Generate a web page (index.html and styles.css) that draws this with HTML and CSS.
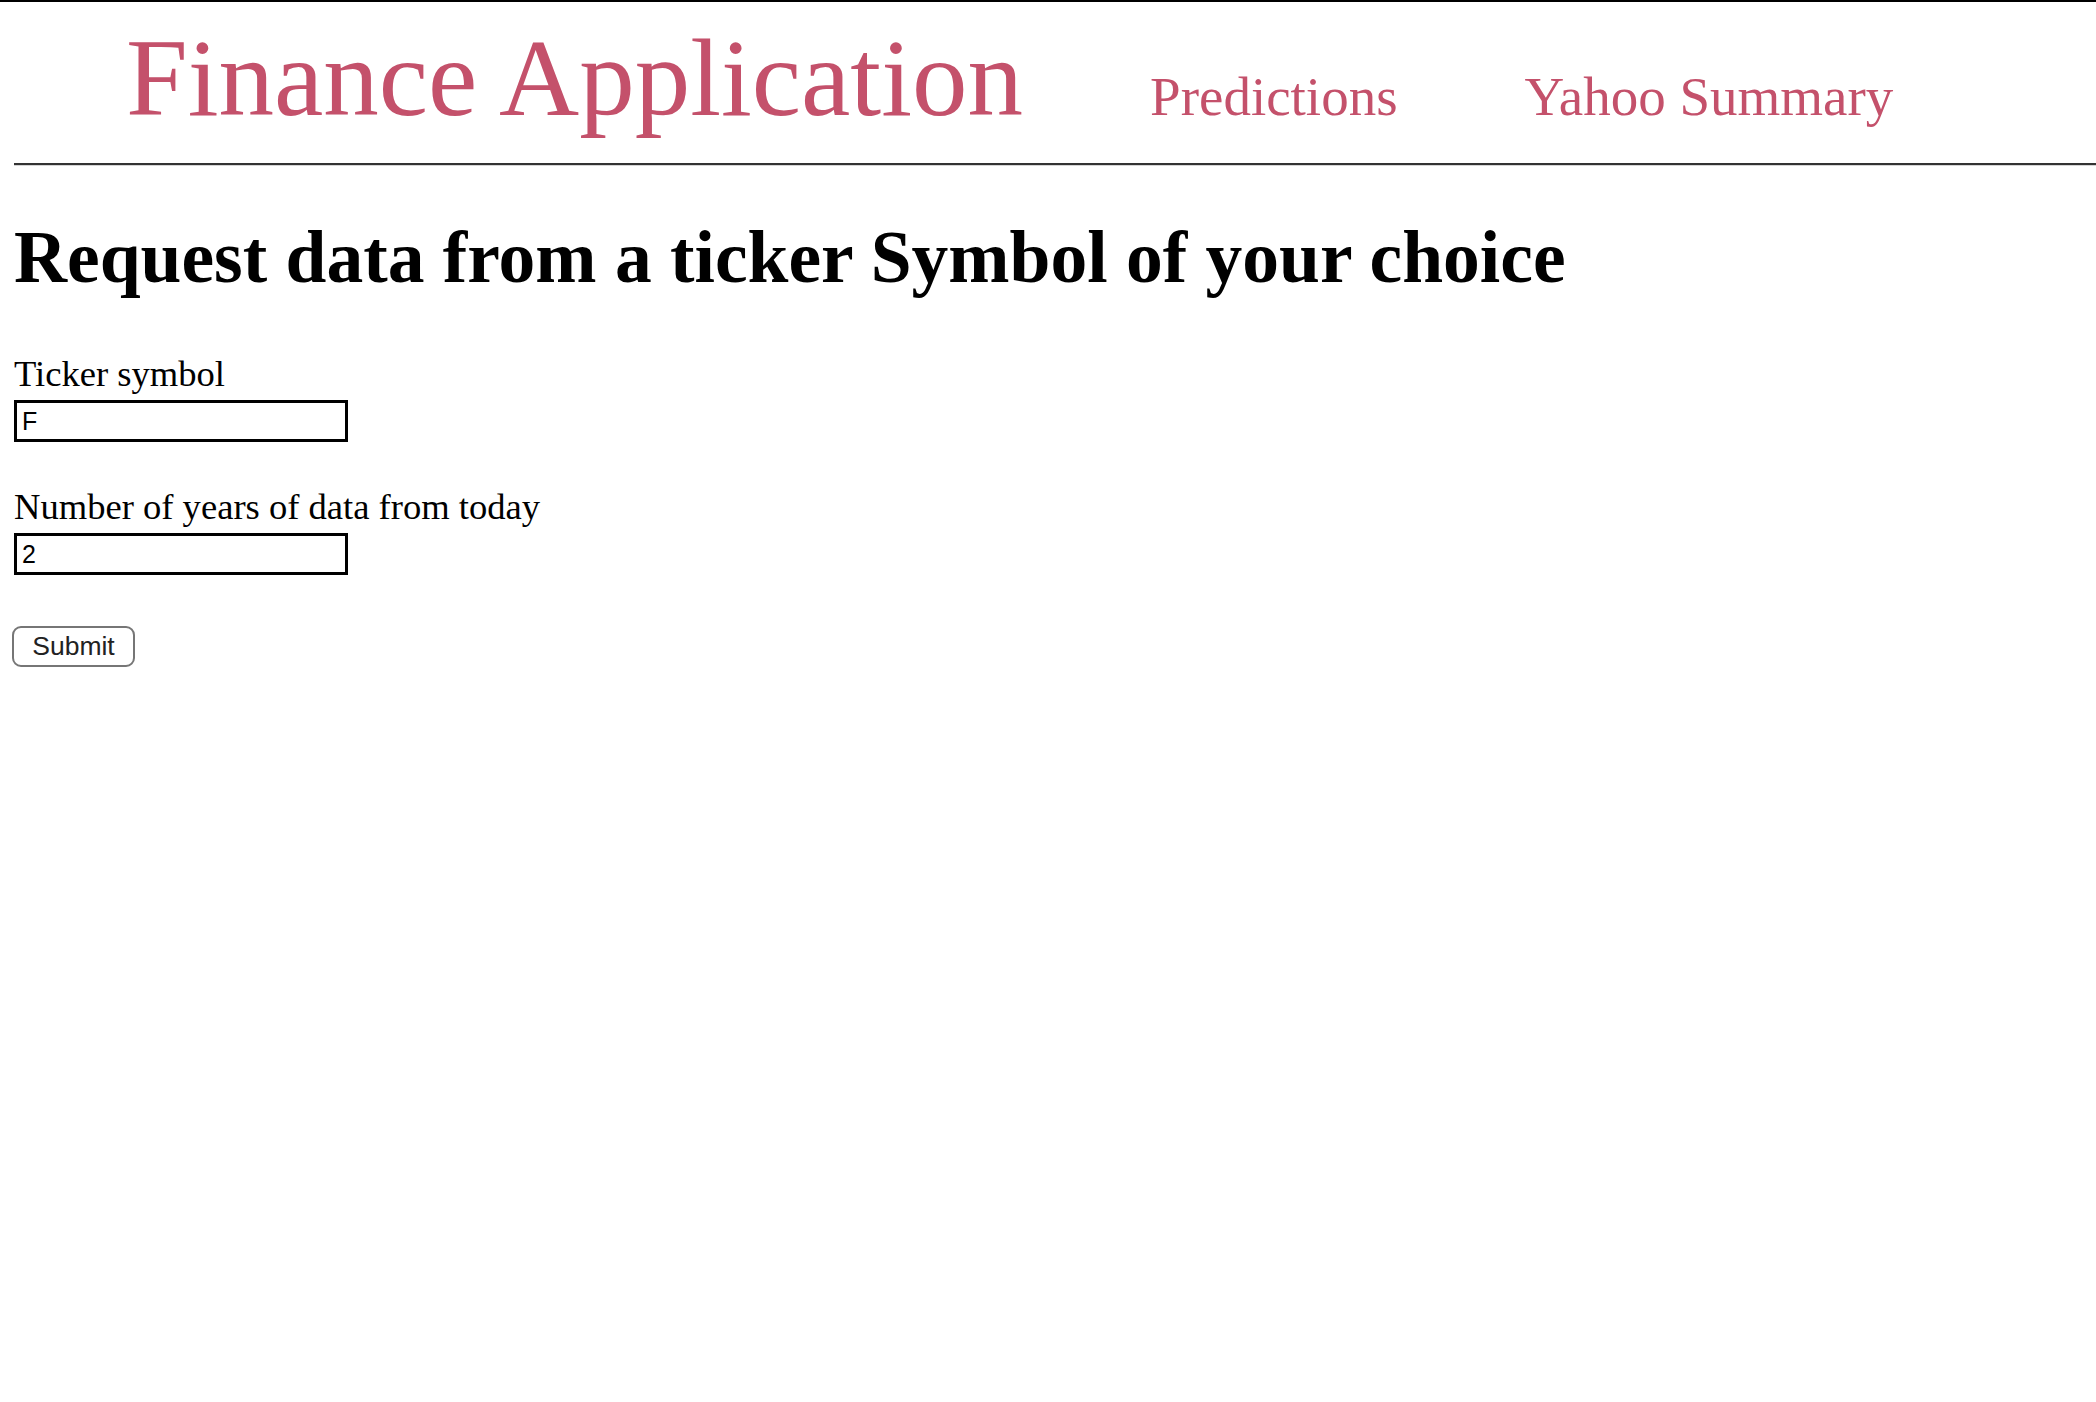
FILE: index.html
```html
<!DOCTYPE html>
<html lang="en">
<head>
<meta charset="utf-8">
<title>Finance Application</title>
<link rel="stylesheet" href="styles.css">
</head>
<body>
<header class="topbar">
  <a class="brand" href="#">Finance Application</a>
  <nav class="nav">
    <a class="nav-link" href="#">Predictions</a>
    <a class="nav-link" href="#">Yahoo Summary</a>
  </nav>
</header>
<main class="content">
  <h1 class="page-title">Request data from a ticker Symbol of your choice</h1>
  <form class="form">
    <label class="field-label" for="ticker">Ticker symbol</label>
    <input class="field-input" id="ticker" type="text" value="F">
    <label class="field-label second" for="years">Number of years of data from today</label>
    <input class="field-input" id="years" type="text" value="2">
    <button class="submit-btn" type="button">Submit</button>
  </form>
</main>
</body>
</html>
```
FILE: styles.css
```css
html {
  border-top: 2px solid #000;
  background: #fff;
}
body {
  margin: 0;
  padding: 0 0 0 14px;
  font-family: "Liberation Serif", "Times New Roman", serif;
  color: #000;
}
.topbar {
  display: flex;
  align-items: baseline;
  gap: 127px;
  padding: 21px 0 30px 112px;
  border-bottom: 2px solid #333;
  box-shadow: 0 1px 0 #d4d4d4;
}
.brand {
  font-size: 111px;
  line-height: 110px;
  color: #c4516b;
  text-decoration: none;
}
.nav {
  display: flex;
  align-items: baseline;
  gap: 127px;
}
.nav-link {
  font-size: 55px;
  line-height: 55px;
  color: #c4516b;
  text-decoration: none;
}
.content {
  display: block;
}
.page-title {
  margin: 56px 0 0 0;
  font-size: 73.5px;
  line-height: 74px;
  font-weight: bold;
}
.form {
  display: flex;
  flex-direction: column;
  align-items: flex-start;
  margin-top: 58px;
}
.field-label {
  font-size: 36.6px;
  line-height: 42px;
  margin-bottom: 5px;
}
.field-label.second {
  margin-top: 44px;
}
.field-input {
  box-sizing: border-box;
  width: 334px;
  height: 42px;
  margin: 0;
  border: 3px solid #000;
  padding: 0 5px;
  font-family: "Liberation Sans", Arial, sans-serif;
  font-size: 25px;
  color: #000;
  background: #fff;
  outline: none;
}
.submit-btn {
  box-sizing: border-box;
  margin: 51px 0 0 -2px;
  width: 123px;
  height: 41px;
  border: 2px solid #767676;
  border-radius: 9px;
  background: #fff;
  font-family: "Liberation Sans", Arial, sans-serif;
  font-size: 26.5px;
  color: #222;
  padding: 0;
}
```
